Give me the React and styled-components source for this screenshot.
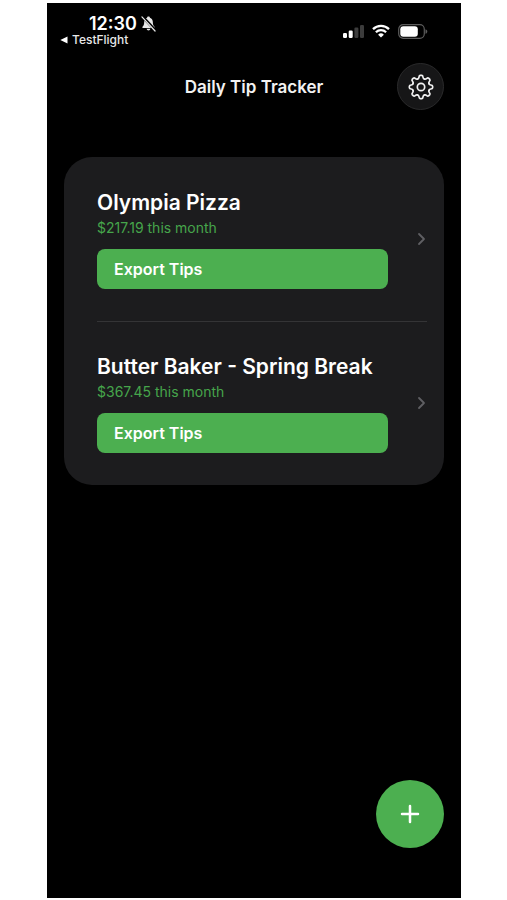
import React from "react";
import styled, { createGlobalStyle } from "styled-components";

const GlobalStyle = createGlobalStyle`
  * {
    box-sizing: border-box;
  }

  body {
    margin: 0;
    background-color: #fff;
    font-family: Inter, "Liberation Sans", sans-serif;
    color: #fff;
  }

  h1, h2, p, ul {
    margin: 0;
    padding: 0;
  }
`;

const Page = styled.div`
  display: flex;
  min-height: 100vh;
  padding: 3px 46px 2px 47px;
`;

const Screen = styled.div`
  flex: 1;
  display: flex;
  flex-direction: column;
  padding: 0 17px 50px;
  background-color: #000;
`;

const StatusBar = styled.div`
  display: flex;
  justify-content: space-between;
  height: 60px;
  padding-top: 10px;
`;

const Clock = styled.div`
  display: flex;
  align-items: center;
  gap: 4px;
  padding-left: 25px;
  font-size: 18px;
  line-height: 21px;
  font-weight: 600;
`;

const BackLink = styled.a`
  display: flex;
  align-items: center;
  gap: 4px;
  margin-left: -4px;
  font-size: 12px;
  line-height: 12px;
  font-weight: 500;
  color: #e8e8e8;
  text-decoration: none;
`;

const StatusIcons = styled.div`
  display: flex;
  align-items: center;
  gap: 8px;
  height: 36px;
  padding-right: 16px;
`;

const Header = styled.header`
  display: grid;
  grid-template-columns: 1fr auto 1fr;
  align-items: center;
`;

const HeaderTitle = styled.h1`
  grid-column: 2;
  font-size: 17px;
  line-height: 24px;
  font-weight: 600;
  color: #f2f2f2;
`;

const SettingsButton = styled.button`
  display: flex;
  align-items: center;
  justify-content: center;
  justify-self: end;
  width: 47px;
  height: 47px;
  padding: 0;
  border: 1px solid #2a2a2b;
  border-radius: 50%;
  background-color: #161617;
`;

const JobList = styled.ul`
  margin-top: 47px;
  border-radius: 28px;
  background-color: #1c1c1e;
  list-style: none;
`;

const JobItem = styled.li`
  margin-left: 33px;
  margin-right: 17px;

  & + & {
    box-shadow: inset 0 1px #343436;
  }
`;

const JobRow = styled.div`
  display: flex;
  align-items: center;
  justify-content: space-between;
  padding: 32px 0;
`;

const JobBody = styled.div`
  flex: 1;
  margin-right: 28px;
`;

const JobName = styled.h2`
  font-size: 21px;
  line-height: 28px;
  font-weight: 600;
`;

const JobTotal = styled.p`
  margin-bottom: 10px;
  font-size: 14px;
  line-height: 22px;
  color: #46a54b;
`;

const ExportButton = styled.button`
  display: block;
  width: 100%;
  height: 40px;
  padding: 0 17px;
  border: none;
  border-radius: 8px;
  background-color: #4caf50;
  color: #fff;
  font-family: inherit;
  font-size: 16px;
  font-weight: 600;
  text-align: left;
`;

const AddButton = styled.button`
  display: flex;
  align-items: center;
  justify-content: center;
  align-self: flex-end;
  width: 68px;
  height: 68px;
  margin-top: auto;
  padding: 0;
  border: none;
  border-radius: 50%;
  background-color: #4caf50;
`;

const jobs = [
  { name: "Olympia Pizza", total: "$217.19" },
  { name: "Butter Baker - Spring Break", total: "$367.45" },
];

const toothAngles = [0, 45, 90, 135, 180, 225, 270, 315];

function GearIcon() {
  return (
    <svg width="26" height="26" viewBox="-13 -13 26 26" aria-hidden="true">
      <g fill="none" stroke="#f2f2f2" strokeWidth="1.7" strokeLinecap="round" strokeLinejoin="round">
        {toothAngles.map((angle) => (
          <path
            key={angle}
            transform={`rotate(${angle})`}
            d="M-3.3-8C-2.5-8.3-2.100-8.800-2-9.800C-1.900-11-1.600-11.500-.9-11.600H.9C1.600-11.500 1.900-11 2-9.800C2.100-8.800 2.500-8.300 3.300-8"
          />
        ))}
        <circle r="3.700" />
      </g>
    </svg>
  );
}

function BellOffIcon() {
  return (
    <svg width="15" height="17" viewBox="0 0 16 18" aria-hidden="true">
      <path
        d="M8 1.500c-.9 0-1.500.6-1.500 1.300C4.300 3.500 3.400 5.300 3.400 7.500c0 2.900-.7 3.900-1.800 5-.5.600-.2 1.300.5 1.300h11.800c.7 0 1-.7.500-1.300-1.100-1.100-1.800-2.100-1.800-5 0-2.200-.9-4-3.100-4.700C9.500 2.100 8.900 1.500 8 1.500zM5.900 14.700a2.150 2.150 0 0 0 4.200 0z"
        fill="#e8e8e8"
      />
      <path d="M2 2l13 14" stroke="#000" strokeWidth="3" />
      <path d="M1 2l14 15" stroke="#e8e8e8" strokeWidth="1.3" strokeLinecap="round" />
    </svg>
  );
}

function SignalIcon() {
  return (
    <svg width="21" height="14" viewBox="0 0 21 14" aria-hidden="true">
      <rect x="0" y="9" width="4" height="5" rx="1.2" fill="#fff" />
      <rect x="5.7" y="6.5" width="4" height="7.5" rx="1.2" fill="#fff" />
      <rect x="11.4" y="3.5" width="4" height="10.5" rx="1.2" fill="#3c3c3c" />
      <rect x="17" y="1" width="4" height="13" rx="1.2" fill="#3c3c3c" />
    </svg>
  );
}

function WifiIcon() {
  return (
    <svg width="18" height="14" viewBox="0 0 18 14" aria-hidden="true">
      <g fill="none" stroke="#fff" strokeWidth="2.3">
        <path d="M1 5.100a11.500 11.500 0 0 1 16 0" />
        <path d="M3.900 8.200a7.300 7.300 0 0 1 10.200 0" />
      </g>
      <path d="M9 13.600l-2.900-2.900a4.200 4.200 0 0 1 5.800 0z" fill="#fff" />
    </svg>
  );
}

function BatteryIcon() {
  return (
    <svg width="30" height="15" viewBox="0 0 30 15" aria-hidden="true">
      <rect x=".7" y=".7" width="25.6" height="13.6" rx="4.5" fill="none" stroke="#5c5c5c" strokeWidth="1.2" />
      <rect x="2.3" y="2.3" width="17.5" height="10.4" rx="3" fill="#fff" />
      <path d="M27.500 5.200c1.200.4 1.800 1.300 1.800 2.300s-.6 1.900-1.800 2.300z" fill="#5c5c5c" />
    </svg>
  );
}

function BackIcon() {
  return (
    <svg width="8" height="8" viewBox="0 0 8 8" aria-hidden="true">
      <path d="M7.500 .5v7L.3 4z" fill="#fff" />
    </svg>
  );
}

function ChevronIcon() {
  return (
    <svg width="11" height="14" viewBox="0 0 11 14" aria-hidden="true">
      <path d="M3 2l5 5-5 5" fill="none" stroke="#5f5f63" strokeWidth="1.8" strokeLinecap="round" strokeLinejoin="round" />
    </svg>
  );
}

function PlusIcon() {
  return (
    <svg width="20" height="20" viewBox="0 0 20 20" aria-hidden="true">
      <path d="M10 2v16M2 10h16" stroke="#fff" strokeWidth="2.5" strokeLinecap="round" />
    </svg>
  );
}

function Job(props) {
  const { name, total } = props;

  return (
    <JobItem>
      <JobRow>
        <JobBody>
          <JobName>{name}</JobName>
          <JobTotal>{total} this month</JobTotal>
          <ExportButton type="button">Export Tips</ExportButton>
        </JobBody>
        <ChevronIcon />
      </JobRow>
    </JobItem>
  );
}

export default function App() {
  return (
    <Page>
      <GlobalStyle />
      <Screen>
        <StatusBar>
          <div>
            <Clock>
              12:30
              <BellOffIcon />
            </Clock>
            <BackLink href="#">
              <BackIcon />
              TestFlight
            </BackLink>
          </div>
          <StatusIcons>
            <SignalIcon />
            <WifiIcon />
            <BatteryIcon />
          </StatusIcons>
        </StatusBar>
        <Header>
          <HeaderTitle>Daily Tip Tracker</HeaderTitle>
          <SettingsButton type="button" aria-label="Settings">
            <GearIcon />
          </SettingsButton>
        </Header>
        <JobList>
          {jobs.map((job) => (
            <Job key={job.name} name={job.name} total={job.total} />
          ))}
        </JobList>
        <AddButton type="button" aria-label="Add job">
          <PlusIcon />
        </AddButton>
      </Screen>
    </Page>
  );
}
